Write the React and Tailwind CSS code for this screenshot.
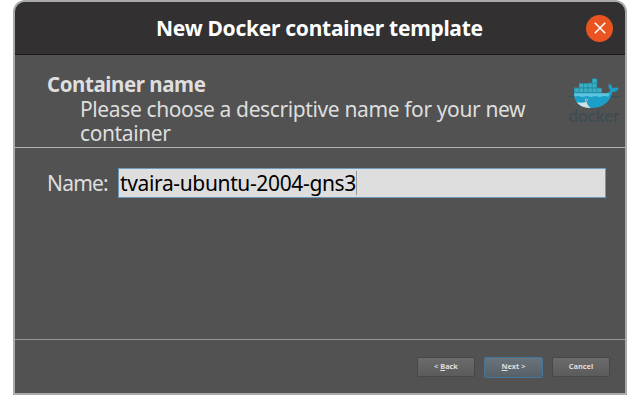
import React from "react";

function DockerLogo() {
  return (
    <div className="flex w-14 shrink-0 flex-col items-center">
      <svg viewBox="0 0 52 32" className="h-8 w-[52px]" aria-hidden="true">
        <path d="M0 18.500h51" stroke="#364c56" strokeWidth="1.200" />
        <path d="M6 14.500v-5h5V5.200h9V4.800h4V.5h5.200v9.200H34V15H6z" fill="#238fa5" />
        <path
          d="M24.600 1.200h3.800v3.600h-3.800zM11.400 5.800h3.600v3.400h-3.600zM15.900 5.800h3.600v3.400h-3.600zM20.300 5.800h3.500v3.400h-3.500zM24.600 5.800h3.800v3.400h-3.800zM6.900 10.400h3.600v3.600H6.900zM11.400 10.400h3.600v3.600h-3.600zM15.900 10.400h3.600v3.600h-3.600zM20.300 10.400h3.500v3.600h-3.500zM24.600 10.400h3.800v3.600h-3.800zM29.400 10.400h3.800v3.600h-3.800z"
          fill="#3aadc3"
        />
        <path d="M6 15.200h30.500c3 0 5-1 6-3-2-1.700-2.700-4-1.200-6.700 2 1.400 3 3 3.300 4.800 2-1 4.200-1.200 6.200-.3-1 2.600-3.200 4-6.400 3.900C42 24 35 30 22.500 30 11 30 6 24 6 15.200z" fill="#1b9fc8" />
        <path d="M6 15.200h35.500l-1 3c-2 .8-3-.3-4.500-.3s-2.500 1-4.200 1-2.700-1-4.300-1-2.600 1-4.300 1-2.700-1-4.300-1-2.600 1-4.300 1-2.600-1-4.300-1-2.500.7-4 .4z" fill="#5bc4e0" />
        <path d="M9 24.300c4 .8 7 .5 9.500-.6 .8 2.700 2 4.600 4.300 6.200C16.500 30.200 12 28.300 9 24.300z" fill="#d3dfe0" />
        <circle cx="18.500" cy="22" r="1.500" fill="#b9d7de" />
        <circle cx="18.700" cy="22" r=".7" fill="#315664" />
      </svg>
      <span className="-mt-0.5 text-[17px] leading-4 tracking-[0.1px] text-[#3b4b54] font-['Lato',sans-serif]">docker</span>
    </div>
  );
}

function Button({ children, focused = false }) {
  return (
    <button
      className={
        "flex items-center justify-center rounded-[2px] border text-[7.4px] leading-none font-bold text-[#dedede] " +
        (focused
          ? "h-[21px] w-[59px] border-[#41759c] bg-linear-to-b from-[#69747a] to-[#566067]"
          : "h-5 w-[58px] border-[#484848] bg-linear-to-b from-[#6b6b6b] to-[#5b5b5b]")
      }
    >
      {children}
    </button>
  );
}

export default function App() {
  return (
    <div className="h-[408px] w-[640px] overflow-hidden bg-white pl-[13px] font-['Noto_Sans',sans-serif]">
      <div className="flex h-[395px] w-[614px] flex-col overflow-hidden rounded-t-[12px] border-2 border-[#aaaaaa] bg-[#525252]">
        <header className="flex h-[53px] shrink-0 items-center border-b border-[#1b1b1b] bg-[#323031] pr-3 pl-[141px]">
          <h1 className="w-[328px] pt-px text-[21px] leading-none font-bold tracking-[-0.28px] whitespace-nowrap text-white">
            New Docker container template
          </h1>
          <button aria-label="Close" className="ml-auto flex size-[27px] items-center justify-center rounded-full bg-[#e95420]">
            <svg viewBox="0 0 12 12" className="size-3" stroke="white" strokeWidth="1.600">
              <path d="M.8.8l10.400 10.400M11.200.8L.8 11.200" />
            </svg>
          </button>
        </header>

        <section className="flex h-[93px] shrink-0 justify-between border-b border-[#b2b2b2] pt-4 pr-[3px] pl-8 text-[#dedede]">
          <div>
            <h2 className="text-[20.500px] leading-[26px] font-bold tracking-[-0.43px] whitespace-nowrap">Container name</h2>
            <p className="pl-[33px] text-[21px] leading-6 tracking-[-0.38px] whitespace-nowrap">
              Please choose a descriptive name for your new
              <br />
              container
            </p>
          </div>
          <div className="pt-[7px]">
            <DockerLogo />
          </div>
        </section>

        <main className="flex h-[192px] shrink-0 items-start border-b border-[#989898] pt-5 pl-8">
          <label className="w-[71px] text-[21px] leading-[30px] tracking-[-0.8px] whitespace-nowrap text-[#dedede]">Name:</label>
          <div className="flex h-[30px] w-[488px] items-center border border-[#6b9abc] bg-[#dedede] pl-px text-black">
            <span className="text-[21px] leading-none tracking-[-0.36px] whitespace-nowrap">tvaira-ubuntu-2004-gns3</span>
            <span className="h-6 w-px bg-[#999999]" />
          </div>
        </main>

        <footer className="flex grow items-center justify-end gap-[9px] pt-px pr-[15px]">
          <Button><span>&lt; <u>B</u>ack</span></Button>
          <Button focused><span><u>N</u>ext &gt;</span></Button>
          <Button>Cancel</Button>
        </footer>
      </div>
    </div>
  );
}
